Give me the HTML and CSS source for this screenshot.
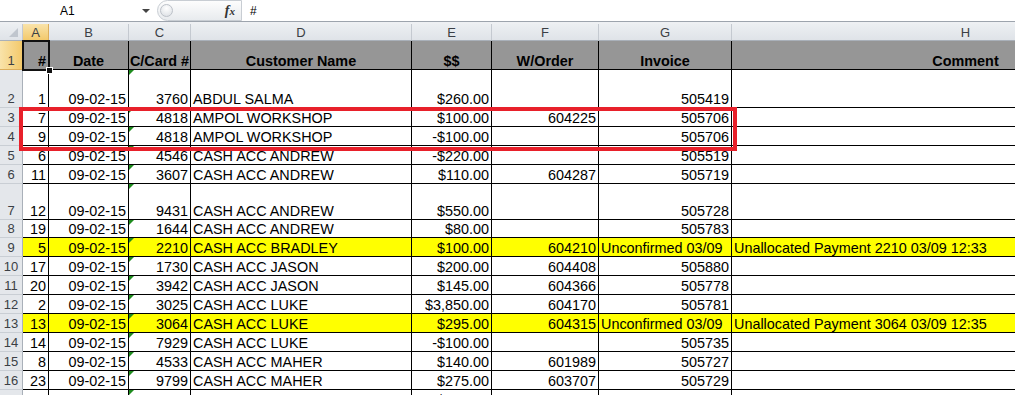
FILE: index.html
```html
<!DOCTYPE html>
<html lang="en">
<head>
  <meta charset="UTF-8" />
  <title>Payments sheet</title>
  <link rel="stylesheet" href="styles.css">
</head>
<body>
  <!-- Formula bar -->
  <div class="formula-bar">
    <div class="name-box"><span>A1</span><span class="caret"></span></div>
    <div class="fx-area"><span class="grip"></span><span class="fx">f<small>x</small></span></div>
    <div class="formula-input">#</div>
  </div>
  <div class="bar-gap"></div>

  <div class="sheet">
    <div class="row col-heads">
      <div class="corner"></div>
      <div class="sel">A</div><div>B</div><div>C</div><div>D</div><div>E</div><div>F</div><div>G</div><div>H</div>
    </div>

    <div class="row head h1">
      <div class="rh sel">1</div>
      <div class="cell">#</div><div class="cell">Date</div><div class="cell">C/Card #</div><div class="cell">Customer Name</div>
      <div class="cell">$$</div><div class="cell">W/Order</div><div class="cell">Invoice</div><div class="cell">Comment</div>
    </div>
    <div class="row h2">
      <div class="rh">2</div>
      <div class="cell">1</div><div class="cell">09-02-15</div><div class="cell">3760</div><div class="cell">ABDUL SALMA</div>
      <div class="cell">$260.00</div><div class="cell"></div><div class="cell">505419</div><div class="cell"></div>
    </div>
    <div class="row">
      <div class="rh">3</div>
      <div class="cell">7</div><div class="cell">09-02-15</div><div class="cell">4818</div><div class="cell">AMPOL WORKSHOP</div>
      <div class="cell">$100.00</div><div class="cell">604225</div><div class="cell">505706</div><div class="cell"></div>
    </div>
    <div class="row">
      <div class="rh">4</div>
      <div class="cell">9</div><div class="cell">09-02-15</div><div class="cell">4818</div><div class="cell">AMPOL WORKSHOP</div>
      <div class="cell">-$100.00</div><div class="cell"></div><div class="cell">505706</div><div class="cell"></div>
    </div>
    <div class="row">
      <div class="rh">5</div>
      <div class="cell">6</div><div class="cell">09-02-15</div><div class="cell">4546</div><div class="cell">CASH ACC ANDREW</div>
      <div class="cell">-$220.00</div><div class="cell"></div><div class="cell">505519</div><div class="cell"></div>
    </div>
    <div class="row">
      <div class="rh">6</div>
      <div class="cell">11</div><div class="cell">09-02-15</div><div class="cell">3607</div><div class="cell">CASH ACC ANDREW</div>
      <div class="cell">$110.00</div><div class="cell">604287</div><div class="cell">505719</div><div class="cell"></div>
    </div>
    <div class="row h7">
      <div class="rh">7</div>
      <div class="cell">12</div><div class="cell">09-02-15</div><div class="cell">9431</div><div class="cell">CASH ACC ANDREW</div>
      <div class="cell">$550.00</div><div class="cell"></div><div class="cell">505728</div><div class="cell"></div>
    </div>
    <div class="row h8">
      <div class="rh">8</div>
      <div class="cell">19</div><div class="cell">09-02-15</div><div class="cell">1644</div><div class="cell">CASH ACC ANDREW</div>
      <div class="cell">$80.00</div><div class="cell"></div><div class="cell">505783</div><div class="cell"></div>
    </div>
    <div class="row hl">
      <div class="rh">9</div>
      <div class="cell">5</div><div class="cell">09-02-15</div><div class="cell">2210</div><div class="cell">CASH ACC BRADLEY</div>
      <div class="cell">$100.00</div><div class="cell">604210</div><div class="cell txt">Unconfirmed 03/09</div><div class="cell">Unallocated Payment 2210 03/09 12:33</div>
    </div>
    <div class="row">
      <div class="rh">10</div>
      <div class="cell">17</div><div class="cell">09-02-15</div><div class="cell">1730</div><div class="cell">CASH ACC JASON</div>
      <div class="cell">$200.00</div><div class="cell">604408</div><div class="cell">505880</div><div class="cell"></div>
    </div>
    <div class="row">
      <div class="rh">11</div>
      <div class="cell">20</div><div class="cell">09-02-15</div><div class="cell">3942</div><div class="cell">CASH ACC JASON</div>
      <div class="cell">$145.00</div><div class="cell">604366</div><div class="cell">505778</div><div class="cell"></div>
    </div>
    <div class="row">
      <div class="rh">12</div>
      <div class="cell">2</div><div class="cell">09-02-15</div><div class="cell">3025</div><div class="cell">CASH ACC LUKE</div>
      <div class="cell">$3,850.00</div><div class="cell">604170</div><div class="cell">505781</div><div class="cell"></div>
    </div>
    <div class="row hl">
      <div class="rh">13</div>
      <div class="cell">13</div><div class="cell">09-02-15</div><div class="cell">3064</div><div class="cell">CASH ACC LUKE</div>
      <div class="cell">$295.00</div><div class="cell">604315</div><div class="cell txt">Unconfirmed 03/09</div><div class="cell">Unallocated Payment 3064 03/09 12:35</div>
    </div>
    <div class="row">
      <div class="rh">14</div>
      <div class="cell">14</div><div class="cell">09-02-15</div><div class="cell">7929</div><div class="cell">CASH ACC LUKE</div>
      <div class="cell">-$100.00</div><div class="cell"></div><div class="cell">505735</div><div class="cell"></div>
    </div>
    <div class="row">
      <div class="rh">15</div>
      <div class="cell">8</div><div class="cell">09-02-15</div><div class="cell">4533</div><div class="cell">CASH ACC MAHER</div>
      <div class="cell">$140.00</div><div class="cell">601989</div><div class="cell">505727</div><div class="cell"></div>
    </div>
    <div class="row">
      <div class="rh">16</div>
      <div class="cell">23</div><div class="cell">09-02-15</div><div class="cell">9799</div><div class="cell">CASH ACC MAHER</div>
      <div class="cell">$275.00</div><div class="cell">603707</div><div class="cell">505729</div><div class="cell"></div>
    </div>
    <div class="row">
      <div class="rh">17</div>
      <div class="cell">24</div><div class="cell">09-02-15</div><div class="cell">9537</div><div class="cell">CASH ACC MAHER</div>
      <div class="cell">$120.00</div><div class="cell">604405</div><div class="cell">505764</div><div class="cell"></div>
    </div>

    <!-- overlays -->
    <div class="selection"><span class="fill-handle"></span></div>
    <div class="red-box"></div>
  </div>
</body>
</html>
```

FILE: styles.css
```css
*, *::before, *::after { box-sizing: border-box; }
html, body {
  margin: 0; padding: 0; height: 100%; overflow: hidden;
  background: #fff; color: #000;
  font-family: "Liberation Sans", Arial, sans-serif;
}

/* formula bar */
.formula-bar {
  display: flex; height: 22px;
  border-bottom: 1px solid #9da4ad;
  font-size: 12px;
}
.name-box {
  width: 157px; display: flex; align-items: center;
  padding: 0 7px 0 60px;
}
.caret {
  margin-left: auto; width: 0; height: 0;
  border-left: 4px solid transparent; border-right: 4px solid transparent;
  border-top: 4px solid #444;
}
.fx-area {
  width: 85px; display: flex; align-items: center; justify-content: space-between;
  padding: 0 6px 0 2px;
  border: 1px solid #c8cdd3; border-radius: 11px 0 0 11px;
  background: linear-gradient(#fdfdfd, #e8ebee);
}
.grip {
  width: 13px; height: 13px; border-radius: 50%;
  border: 1px solid #bcc1c8;
  background: radial-gradient(circle at 50% 30%, #fff, #d9dde2);
}
.fx {
  font-family: "Liberation Serif", serif; font-style: italic; font-weight: bold;
  font-size: 14px; color: #333;
}
.fx small { font-size: 11px; }
.formula-input { display: flex; align-items: center; padding-left: 8px; }
.bar-gap { height: 2px; background: #eef0f3; }

/* grid */
.sheet { position: relative; width: 1200px; }
.row {
  display: grid; height: 19px;
  grid-template-columns: 23px 26px 80px 62px 221px 80px 107px 133px 468px;
}
.row.h1 { height: 29px; }
.row.h2 { height: 38px; }
.row.h7 { height: 36px; }
.row.h8 { height: 18px; }

.col-heads { height: 17px; }
.col-heads > div {
  display: flex; align-items: center; justify-content: center;
  font-size: 13px; color: #3b3f45;
  background: linear-gradient(#eceff2, #dfe3e8);
  border-right: 1px solid #c4c9d0; border-bottom: 1px solid #a9b0b9;
}
.col-heads > .sel {
  background: linear-gradient(#f9e3aa, #f3c96b);
  border-bottom-color: #e3a443; border-right-color: #dcae5c;
}
.corner { position: relative; }
.corner::after {
  content: ""; position: absolute; right: 4px; bottom: 3px;
  border-left: 9px solid transparent; border-bottom: 9px solid #c0c6ce;
}

.rh {
  display: flex; align-items: flex-end; justify-content: center;
  font-size: 13px; line-height: 15px; padding-bottom: 1px; color: #3b3f45;
  background: #e4e7eb;
  border-right: 1px solid #a9b0b9; border-bottom: 1px solid #c9ced4;
}
.rh.sel {
  background: linear-gradient(90deg, #f9e3aa, #f3c96b);
  border-right-color: #e3a443; border-bottom-color: #dcae5c;
}

.cell {
  position: relative;
  display: flex; align-items: flex-end; justify-content: flex-end;
  padding: 0 2px; white-space: nowrap; overflow: hidden;
  font-size: 14.4px; line-height: 15px;
  border-right: 1px solid #000; border-bottom: 1px solid #000;
}
.row > .cell:nth-child(5),
.row > .cell:nth-child(9),
.cell.txt { justify-content: flex-start; }

/* header row: bold on grey, centred titles */
.row.head > .cell {
  background: #969696; font-weight: bold;
  justify-content: center; padding: 0 1px;
}
.row.head > .cell:nth-child(2) { justify-content: flex-end; padding-right: 2px; }
.hl .cell { background: #ffff00; }

/* number-stored-as-text markers */
.row:not(.head):not(.col-heads) > .cell:nth-child(4)::before {
  content: ""; position: absolute; top: 0; left: 0;
  border-top: 5px solid #1e8c1e; border-right: 5px solid transparent;
}

/* overlays */
.selection {
  position: absolute; left: 22px; top: 16px; width: 28px; height: 31px;
  border: 2px solid #111;
}
.fill-handle {
  position: absolute; right: -5px; bottom: -5px; width: 7px; height: 7px;
  background: #111; border: 1px solid #fff;
}
.red-box {
  position: absolute; left: 19px; top: 83px; width: 718px; height: 44px;
  border: 4px solid #e8202a;
}
```
